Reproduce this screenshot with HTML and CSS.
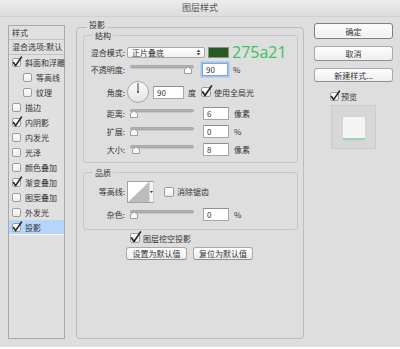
FILE: index.html
```html
<!DOCTYPE html>
<html lang="zh-CN">
<head>
  <meta charset="UTF-8">
  <title>图层样式</title>
  <link rel="stylesheet" href="styles.css">
</head>
<body>
  <div class="dialog">
    <div class="titlebar">图层样式</div>
    <div class="content">

      <div class="sidebar">
        <div class="side-head">样式</div>
        <div class="side-blend">混合选项:默认</div>
        <div class="side-item"><span class="cb"><svg width="9" height="9" viewBox="0 0 9 9"><path d="M1.5 4.5 L3.6 7.6 L9.5 -1"/></svg></span>斜面和浮雕</div>
        <div class="side-item sub"><span class="cb"></span>等高线</div>
        <div class="side-item sub"><span class="cb"></span>纹理</div>
        <div class="side-item"><span class="cb"></span>描边</div>
        <div class="side-item"><span class="cb"><svg width="9" height="9" viewBox="0 0 9 9"><path d="M1.5 4.5 L3.6 7.6 L9.5 -1"/></svg></span>内阴影</div>
        <div class="side-item"><span class="cb"></span>内发光</div>
        <div class="side-item"><span class="cb"></span>光泽</div>
        <div class="side-item"><span class="cb"></span>颜色叠加</div>
        <div class="side-item"><span class="cb"><svg width="9" height="9" viewBox="0 0 9 9"><path d="M1.5 4.5 L3.6 7.6 L9.5 -1"/></svg></span>渐变叠加</div>
        <div class="side-item"><span class="cb"></span>图案叠加</div>
        <div class="side-item"><span class="cb"></span>外发光</div>
        <div class="side-item selected"><span class="cb"><svg width="9" height="9" viewBox="0 0 9 9"><path d="M1.5 4.5 L3.6 7.6 L9.5 -1"/></svg></span>投影</div>
      </div>

      <fieldset class="panel">
        <legend>投影</legend>

        <fieldset class="group structure">
          <legend>结构</legend>
          <div class="row r-blend">
            <span class="lbl">混合模式:</span>
            <div class="select">
              <span>正片叠底</span>
              <svg width="5" height="7" viewBox="0 0 5 7"><path d="M0.5 3 L2.5 0.5 L4.5 3 Z M0.5 4 L2.5 6.5 L4.5 4 Z"/></svg>
            </div>
            <span class="swatch"></span>
            <span class="hex">275a21</span>
          </div>
          <div class="row r-19">
            <span class="lbl">不透明度:</span>
            <svg class="slider" width="64" height="9" viewBox="0 0 64 9"><rect x="0.5" y="0.5" width="63" height="2.5" rx="1.2"/><path transform="translate(58 0)" d="M-3.5 8.5 V4.5 L0 1.8 L3.5 4.5 V8.5 Z"/></svg>
            <span class="num focus">90</span>
            <span class="unit">%</span>
          </div>
          <div class="row r-angle">
            <span class="lbl">角度:</span>
            <svg class="dial" width="22" height="22" viewBox="0 0 22 22">
              <defs><linearGradient id="dg" x1="0" y1="0" x2="0" y2="1"><stop offset="0" stop-color="#fbfbfb"/><stop offset="1" stop-color="#e4e4e4"/></linearGradient></defs>
              <circle cx="11" cy="11" r="10.5" fill="url(#dg)" stroke="#a4a4a4"/>
              <line x1="11" y1="11" x2="11" y2="2" stroke="#444" stroke-width="1"/>
              <circle cx="11" cy="11" r="1" fill="#444"/>
            </svg>
            <span class="num wide">90</span>
            <span class="unit">度</span>
            <span class="cb big"><svg width="10" height="10" viewBox="0 0 9 9"><path d="M1.5 4.5 L3.6 7.6 L9.5 -1"/></svg></span>
            <span class="cb-text">使用全局光</span>
          </div>
          <div class="row r-17">
            <span class="lbl">距离:</span>
            <svg class="slider" width="64" height="9" viewBox="0 0 64 9"><rect x="0.5" y="0.5" width="63" height="2.5" rx="1.2"/><path transform="translate(4 0)" d="M-3.5 8.5 V4.5 L0 1.8 L3.5 4.5 V8.5 Z"/></svg>
            <span class="num">6</span>
            <span class="unit">像素</span>
          </div>
          <div class="row r-19">
            <span class="lbl">扩展:</span>
            <svg class="slider" width="64" height="9" viewBox="0 0 64 9"><rect x="0.5" y="0.5" width="63" height="2.5" rx="1.2"/><path transform="translate(4 0)" d="M-3.5 8.5 V4.5 L0 1.8 L3.5 4.5 V8.5 Z"/></svg>
            <span class="num">0</span>
            <span class="unit">%</span>
          </div>
          <div class="row r-16">
            <span class="lbl">大小:</span>
            <svg class="slider" width="64" height="9" viewBox="0 0 64 9"><rect x="0.5" y="0.5" width="63" height="2.5" rx="1.2"/><path transform="translate(6 0)" d="M-3.5 8.5 V4.5 L0 1.8 L3.5 4.5 V8.5 Z"/></svg>
            <span class="num">8</span>
            <span class="unit">像素</span>
          </div>
        </fieldset>

        <fieldset class="group quality">
          <legend>品质</legend>
          <div class="row r-contour">
            <span class="lbl">等高线:</span>
            <svg class="contour" width="27" height="22" viewBox="0 0 27 22">
              <rect x="0.5" y="0.5" width="26" height="21" fill="#fff" stroke="#a2a2a2"/>
              <path d="M1 21 L22 1 L22 21 Z" fill="#bcbcbc"/>
              <rect x="22" y="1" width="4.5" height="20" fill="#f3f3f3"/>
              <line x1="22" y1="1" x2="22" y2="21" stroke="#c2c2c2"/>
              <path d="M23 10 L26 10 L24.5 12 Z" fill="#333"/>
            </svg>
            <span class="cb big aa"></span>
            <span class="cb-text">消除锯齿</span>
          </div>
          <div class="row r-19">
            <span class="lbl">杂色:</span>
            <svg class="slider" width="64" height="9" viewBox="0 0 64 9"><rect x="0.5" y="0.5" width="63" height="2.5" rx="1.2"/><path transform="translate(4 0)" d="M-3.5 8.5 V4.5 L0 1.8 L3.5 4.5 V8.5 Z"/></svg>
            <span class="num">0</span>
            <span class="unit">%</span>
          </div>
        </fieldset>

        <div class="knockout">
          <span class="cb big"><svg width="10" height="10" viewBox="0 0 9 9"><path d="M1.5 4.5 L3.6 7.6 L9.5 -1"/></svg></span>
          <span class="cb-text">图层挖空投影</span>
        </div>
        <div class="defaults">
          <button class="btn set">设置为默认值</button>
          <button class="btn reset">复位为默认值</button>
        </div>
      </fieldset>

      <div class="actions">
        <button class="btn ok">确定</button>
        <button class="btn cancel">取消</button>
        <button class="btn new">新建样式...</button>
        <div class="preview-check">
          <span class="cb"><svg width="9" height="9" viewBox="0 0 9 9"><path d="M1.5 4.5 L3.6 7.6 L9.5 -1"/></svg></span>
          <span class="cb-text">预览</span>
        </div>
        <div class="preview-box"><div class="preview-swatch"></div></div>
      </div>

    </div>
  </div>
</body>
</html>
```

FILE: styles.css
```css
body { margin: 0; background: #fff; font-family: "Noto Sans CJK SC", "Noto Sans", sans-serif; font-size: 8px; color: #333; }
.dialog { width: 400px; height: 347px; background: #dedede; }
.titlebar {
  height: 16px;
  line-height: 16px;
  text-align: center;
  font-size: 9px;
  color: #555;
  background: linear-gradient(#ececec, #dddddd);
  border-bottom: 1px solid #d0d0d0;
}
.content { display: flex; align-items: flex-start; padding-left: 8px; }

/* left list */
.sidebar {
  width: 57px;
  height: 314px;
  margin-top: 8px;
  box-sizing: border-box;
  border: 1px solid #a9a9a9;
  background: #e0e0e0;
}
.side-head { height: 13px; line-height: 13px; padding-left: 3px; border-bottom: 1px solid #c2c2c2; }
.side-blend { height: 14px; line-height: 14px; padding-left: 3px; border-bottom: 1px solid #c2c2c2; white-space: nowrap; }
.side-item { height: 15px; display: flex; align-items: center; padding-left: 3px; white-space: nowrap; }
.side-item.sub { padding-left: 14px; }
.side-item .cb { margin-right: 4px; }
.side-item.selected { background: #b6d5f8; border-bottom: 1px solid #f4f8fc; height: 14px; }

/* checkbox */
.cb {
  display: inline-flex;
  flex: none;
  width: 9px;
  height: 9px;
  box-sizing: border-box;
  border: 1px solid #9c9c9c;
  border-radius: 2px;
  background: linear-gradient(#ffffff, #ececec);
}
.cb.big { width: 10px; height: 10px; }
.cb svg { overflow: visible; margin: -1px 0 0 -1px; }
.cb path { fill: none; stroke: #222; stroke-width: 1.5; stroke-linecap: round; stroke-linejoin: round; }
.cb-text { margin-left: 3px; white-space: nowrap; }

/* main panel */
.panel {
  margin: 4px 0 0 11px;
  width: 228px;
  height: 318px;
  box-sizing: border-box;
  border: 1px solid #bdbdbd;
  border-radius: 4px;
  padding: 0 5px 0 6px;
  min-width: 0;
}
.panel > legend { font-size: 8px; line-height: 8px; padding: 0 2px 4px; margin-left: 4px; color: #333; }
.group {
  margin: -2px 0 0;
  border: 1px solid #c6c6c6;
  border-radius: 3px;
  padding: 4px 0 5px;
  min-width: 0;
}
.group legend { line-height: 8px; padding: 1px 2px 0; margin-left: 9px; }
.group.quality { margin-top: 5px; padding-top: 1px; }

.row { display: flex; align-items: center; }
.r-blend { height: 16px; }
.r-19 { height: 19px; }
.r-17 { height: 17px; }
.r-16 { height: 16px; }
.r-angle { height: 26px; }
.r-contour { height: 27px; }
.lbl { width: 41px; flex: none; text-align: right; white-space: nowrap; }

.select {
  display: flex;
  align-items: center;
  justify-content: space-between;
  margin-left: 2px;
  width: 78px;
  height: 11px;
  box-sizing: border-box;
  padding: 0 3px 0 4px;
  border: 1px solid #a8a8a8;
  border-radius: 2px;
  background: linear-gradient(#ffffff, #f1f1f1);
  line-height: 9px;
}
.select path { fill: #555; }
.swatch {
  margin-left: 3px;
  width: 21px;
  height: 11px;
  box-sizing: border-box;
  border: 1px solid #8d8d8d;
  background: #275a21;
}
.hex { margin-left: 3px; font-family: "Open Sans", sans-serif; font-size: 16px; line-height: 16px; color: #3cc25c; }

.slider { margin-left: 5px; flex: none; }
.slider rect { fill: #b1b1b1; stroke: #959595; stroke-width: 0.6; }
.slider path { fill: #fafafa; stroke: #8a8a8a; stroke-width: 0.8; }

.num {
  margin-left: 9px;
  width: 26px;
  height: 13px;
  box-sizing: border-box;
  padding-left: 3px;
  line-height: 11px;
  border: 1px solid #a6a6a6;
  border-top-color: #8e8e8e;
  background: #fff;
}
.num.focus { margin-left: 8px; box-shadow: 0 0 0 1.5px #9fc2ef; border-color: #7fa7dc; }
.num.wide { margin-left: 4px; width: 31px; }
.unit { margin-left: 5px; }
.r-angle .unit { margin-left: 4px; }
.r-angle .cb { margin-left: 5px; }

.dial { margin-left: 2px; flex: none; }
.contour { margin-left: 2px; flex: none; }
.cb.aa { margin-left: 10px; }

.knockout { display: flex; align-items: center; height: 10px; margin-top: 3px; padding-left: 47px; }
.defaults { display: flex; gap: 6px; margin-top: 4px; padding-left: 43px; }

.btn {
  display: block;
  padding: 0;
  box-sizing: border-box;
  font-family: "Noto Sans CJK SC", sans-serif;
  font-size: 8px;
  color: #333;
  border: 1px solid #a9a9a9;
  border-bottom-color: #8f8f8f;
  border-radius: 3px;
  background: linear-gradient(#fefefe, #eeeeee);
}
.btn.set { width: 61px; height: 13px; line-height: 11px; }
.btn.reset { width: 60px; height: 13px; line-height: 11px; }

/* right column */
.actions { margin: 6px 0 0 10px; width: 79px; }
.actions .btn { width: 79px; }
.btn.ok { height: 16px; border-color: #7e7e7e; box-shadow: inset 0 0 0 1px #f8f8f8; }
.btn.cancel { height: 15px; margin-top: 7px; }
.btn.new { height: 14px; margin-top: 7px; }
.preview-check { display: flex; align-items: center; height: 10px; margin-top: 9px; padding-left: 16px; }
.preview-check .cb-text { margin-left: 2px; }
.preview-box {
  display: flex;
  justify-content: center;
  margin: 4px 0 0 17px;
  width: 45px;
  height: 44px;
  box-sizing: border-box;
  padding-top: 11px;
  border: 1px solid #cbcbcb;
  background: #d7d7d7;
}
.preview-swatch {
  width: 22px;
  height: 23px;
  box-sizing: border-box;
  background: #f3f5f3;
  border-bottom: 2px solid #9fd1b2;
  box-shadow: 0 0 1px #c4c4c4;
}
```
